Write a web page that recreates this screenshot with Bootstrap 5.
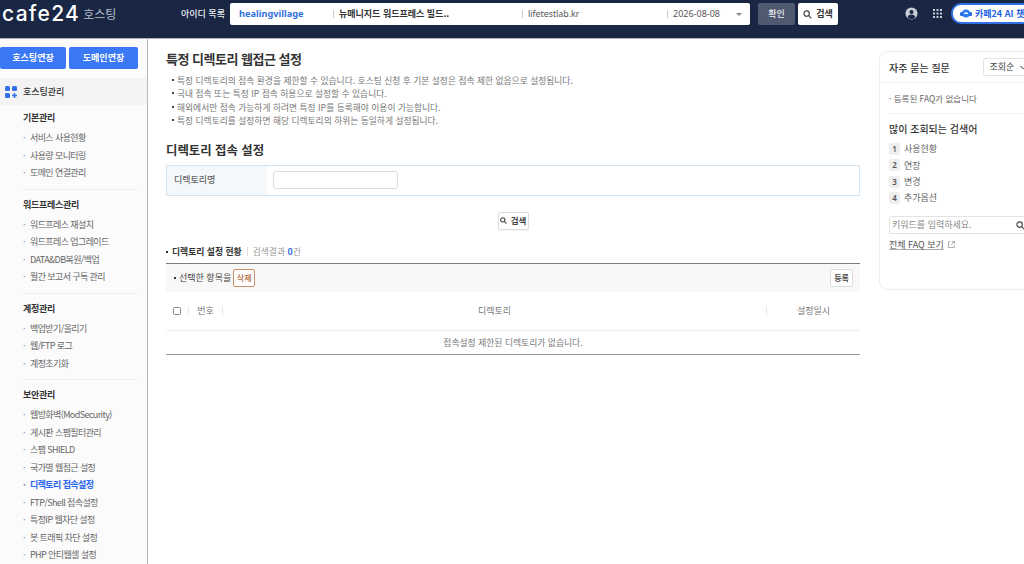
<!DOCTYPE html>
<html lang="ko">
<head>
    <meta charset="UTF-8">
    <meta name="viewport" content="width=device-width, initial-scale=1.0">
    <link href="https://cdn.jsdelivr.net/npm/bootstrap@5.3.0/dist/css/bootstrap.min.css" rel="stylesheet">
    <title>특정 디렉토리 웹접근 설정</title>

    <style>
        html, body { height: 564px; overflow: hidden; }
        body { font-family: "Noto Sans CJK KR", "Noto Sans", sans-serif; font-size: 9px; color: #555; background: #fff; }
        svg { display: block; flex: none; }

        /* top bar */
        .top-bar { height: 39px; background: #1a2744; border-bottom: 1px solid #aeb3bc; padding-top: 3px; }
        .top-bar > * { flex: none; }
        .brand { width: 181px; height: 22px; padding-left: 2px; color: #fff; }
        .brand-logo { font-family: "Inter", sans-serif; font-size: 21px; line-height: 22px; font-weight: 500; letter-spacing: 1.3px; }
        .brand-sub { font-size: 12px; color: #b9bfca; margin-left: 3px; line-height: 22px; }
        .id-label { width: 49px; color: #eef0f4; font-size: 9px; font-weight: 500; line-height: 22px; }
        .acct-bar { width: 520px; height: 22px; background: #fff; border-radius: 2px; line-height: 22px; }
        .acct-id { width: 103px; padding-left: 9px; color: #2f6fe0; font-weight: 700; font-size: 9.2px; font-family: "Noto Sans", sans-serif; }
        .acct-name { width: 189px; color: #333; font-weight: 700; font-size: 9px; white-space: nowrap; }
        .acct-domain { width: 145px; color: #555; font-size: 8.8px; font-family: "Noto Sans", sans-serif; }
        .acct-date { color: #555; font-size: 9px; font-family: "Noto Sans", sans-serif; flex-grow: 1; white-space: nowrap; }
        .acct-sep { width: 1px; height: 8px; background: #ccc; margin-right: 5px; flex: none; }
        .acct-arrow { width: 0; height: 0; border: 3px solid transparent; border-top-color: #888; border-bottom: 0; margin-right: 8px; }
        .btn-confirm { width: 37px; height: 22px; margin-left: 8px; background: #4f5a70; color: #d4d8df; font-size: 9px; font-weight: 700; border-radius: 2px; line-height: 21px; text-align: center; }
        .btn-find { width: 40px; height: 22px; margin-left: 3px; background: #fff; color: #333; font-size: 9px; font-weight: 700; border-radius: 2px; }
        .top-user { margin-left: 67px; }
        .top-grid { margin-left: 15px; }
        .ai-pill { margin-left: 9px; width: 110px; height: 21px; background: #fff; border: 2px solid #2f6fe8; border-radius: 10px; color: #2462e0; font-size: 9px; font-weight: 700; padding-left: 7px; gap: 3px; white-space: nowrap; }

        /* side menu */
        .side-menu { width: 148px; flex: none; background: #fbfbfb; border-right: 1px solid #b9b9b9; height: 525px; overflow: hidden; padding-top: 8px; }
        .side-btn { height: 22px; background: #3a78f5; color: #fff; font-weight: 700; font-size: 9px; border-radius: 2px; line-height: 22px; text-align: center; }
        .side-btn-a { width: 66px; }
        .side-btn-b { width: 69px; margin-left: 3px; }
        .side-head { height: 27px; margin-top: 9px; padding: 1px 0 0 5px; background: #f3f3f3; color: #333; font-weight: 500; font-size: 9px; gap: 6px; margin-bottom: -1px; }
        .side-group { margin: 0 10px 0 23px; padding-bottom: 7px; border-bottom: 1px solid #eee; }
        .side-group + .side-group { margin-top: 8px; }
        .side-group:last-child { border-bottom: 0; }
        .side-title { color: #333; font-weight: 700; font-size: 9px; line-height: 14px; margin-top: 7px; margin-bottom: 4px; letter-spacing: -.3px; }
        .side-item { display: block; color: #666; font-size: 9px; line-height: 17.5px; text-decoration: none; white-space: nowrap; letter-spacing: -.6px; }
        .side-item::before { content: "·"; display: inline-block; width: 7px; color: #888; }
        .side-item.is-on { color: #2a66f0; font-weight: 700; }

        /* main */
        .main-area { width: 731px; flex: none; padding: 11px 19px 0 18px; }
        .page-title { font-size: 13px; font-weight: 700; color: #333; line-height: 18px; margin: 0 0 6px; letter-spacing: -.5px; }
        .guide-list { list-style: none; padding: 0 0 0 7px; margin: 0; color: #777; font-size: 8.75px; line-height: 13.4px; }
        .guide-list li { position: relative; padding-left: 4px; }
        .guide-list li::before { content: ""; position: absolute; left: -1px; top: 5px; width: 2px; height: 2px; background: #444; }
        .sub-title { font-size: 12.4px; font-weight: 700; color: #333; line-height: 18px; margin: 13px 0 6px; }
        .filter-row { height: 31px; border: 1px solid #d3e4f3; }
        .filter-label { width: 100px; background: #f5f8fb; color: #666; font-size: 9px; padding-left: 7px; font-weight: 500; }
        .filter-input { width: 125px; height: 18px; margin-left: 6px; border: 1px solid #ddd; border-radius: 3px; }
        .btn-sm-find { height: 18px; width: 31px; background: #fff; border: 1px solid #ddd; border-radius: 2px; font-size: 8.5px; font-weight: 700; color: #444; box-shadow: 0 1px 1px rgba(0,0,0,.05); }
        .search-row { margin-top: 16px; }
        .result-row { margin-top: 14px; height: 16px; color: #999; font-size: 8.8px; line-height: 16px; }
        .result-name { color: #333; font-weight: 700; padding-left: 6px; position: relative; }
        .result-name::before { content: ""; position: absolute; left: 0; top: 7px; width: 2px; height: 2px; background: #333; }
        .result-sep { width: 1px; height: 9px; background: #ddd; margin: 0 5px; }
        .result-num { color: #2f6fe0; font-weight: 700; }
        .tool-row { margin-top: 3px; height: 29px; background: #f8f8f8; border-top: 1px solid #7c7c7c; padding: 0 7px 0 8px; color: #444; font-size: 9px; }
        .tool-row span.dot { width: 2px; height: 2px; background: #333; margin-right: 3px; }
        .btn-del { width: 22px; height: 18px; text-align: center; margin-left: 2px; background: #fff; border: 1px solid #c9926b; border-radius: 2px; color: #b4683a; font-size: 8px; font-weight: 500; line-height: 16px; }
        .btn-add { width: 23px; height: 18px; text-align: center; background: #fff; border: 1px solid #ddd; border-radius: 2px; color: #444; font-size: 8px; font-weight: 700; line-height: 16px; }
        .data-grid { color: #777; font-size: 9px; }
        .grid-head { height: 39px; padding-top: 1px; border-bottom: 1px solid #eee; }
        .grid-check { width: 8px; height: 8px; border: 1px solid #888; border-radius: 1.5px; margin: 0 7px 0 7px; background: #fff; }
        .grid-sep { width: 1px; height: 8px; background: #e5e5e5; }
        .grid-no { width: 33px; text-align: center; }
        .grid-dir { flex-grow: 1; text-align: center; }
        .grid-date { width: 93px; text-align: center; }
        .grid-empty { height: 24px; line-height: 23px; text-align: center; border-bottom: 1px solid #999; font-size: 8.8px; }

        /* right panel */
        .faq-col { flex: none; width: 145px; padding-top: 12px; }
        .faq-box { width: 175px; height: 239px; border: 1px solid #eee; border-radius: 9px; background: #fff; }
        .faq-top { height: 31px; border-bottom: 1px solid #f0f0f0; padding-left: 9px; }
        .faq-title { color: #333; font-size: 10px; font-weight: 500; width: 95px; }
        .faq-sort { width: 70px; height: 18px; border: 1px solid #e3e3e3; border-radius: 2px; color: #444; font-size: 9px; padding-left: 5px; gap: 6px; }
        .faq-none { margin: 0 0 0 9px; height: 31px; border-bottom: 1px solid #f0f0f0; color: #666; font-size: 8.5px; line-height: 31px; }
        .faq-sub { color: #333; font-size: 10px; font-weight: 500; padding-left: 9px; line-height: 14px; margin: 8px 0 5px; }
        .faq-kw { height: 16.3px; padding-left: 9px; color: #666; font-size: 9px; gap: 4px; }
        .faq-num { width: 11px; height: 12px; background: #eee; border-radius: 2px; text-align: center; line-height: 12px; font-size: 8px; color: #555; font-family: "Noto Sans", sans-serif; font-weight: 600; }
        .faq-input { margin: 10px 0 0 9px; height: 18px; border: 1px solid #e3e3e3; border-radius: 2px; padding-left: 2px; color: #888; font-size: 9px; gap: 44px; }
        .faq-link { padding-left: 9px; margin-top: 4px; color: #555; font-size: 9px; line-height: 13px; gap: 4px; }
        .faq-link u { text-decoration-color: #aaa; }
    </style>
</head>
<body>
<header class="top-bar d-flex">
    <div class="brand d-flex">
        <span class="brand-logo">cafe24</span>
        <span class="brand-sub">호스팅</span>
    </div>
    <div class="id-label">아이디 목록</div>
    <div class="acct-bar d-flex align-items-center">
        <div class="acct-id">healingvillage</div>
        <div class="acct-name d-flex align-items-center"><span class="acct-sep"></span>뉴매니지드 워드프레스 빌드..</div>
        <div class="acct-domain d-flex align-items-center"><span class="acct-sep"></span>lifetestlab.kr</div>
        <div class="acct-date d-flex align-items-center"><span class="acct-sep"></span>2026-08-08</div>
        <span class="acct-arrow"></span>
    </div>
    <div class="btn-confirm">확인</div>
    <div class="btn-find d-flex align-items-center justify-content-center gap-1">
        <svg width="9" height="9" viewBox="0 0 10 10" fill="none" stroke="#444" stroke-width="1.3"><circle cx="4" cy="4" r="3"/><path d="M6.3 6.3 9.3 9.3"/></svg>
        검색
    </div>
    <svg class="top-user mt-1" width="13" height="13" viewBox="0 0 14 14"><circle cx="7" cy="7" r="6.5" fill="#c8ccd4"/><circle cx="7" cy="5.3" r="2.2" fill="#1a2744"/><path d="M2.8 11c.8-2 2.4-2.8 4.2-2.8s3.4.8 4.2 2.8C10 12.300 8.500 13 7 13s-3-.7-4.200-2z" fill="#1a2744"/></svg>
    <svg class="top-grid mt-1" width="9" height="13" viewBox="0 0 9 13" fill="#c8ccd4"><rect x="0" y="2" width="2" height="2"/><rect x="3.500" y="2" width="2" height="2"/><rect x="7" y="2" width="2" height="2"/><rect x="0" y="5.500" width="2" height="2"/><rect x="3.500" y="5.500" width="2" height="2"/><rect x="7" y="5.500" width="2" height="2"/><rect x="0" y="9" width="2" height="2"/><rect x="3.500" y="9" width="2" height="2"/><rect x="7" y="9" width="2" height="2"/></svg>
    <div class="ai-pill d-flex align-items-center">
        <svg width="12" height="10" viewBox="0 0 12 10"><rect x="0" y="3" width="12" height="4" rx="1.500" fill="#1f5fd8"/><circle cx="6" cy="4.500" r="4" fill="#2f7cf0"/><rect x="4" y="3.500" width="4" height="1.500" rx=".7" fill="#fff"/></svg>
        카페24 AI 챗봇
    </div>
</header>

<div class="d-flex">
    <nav class="side-menu">
        <div class="d-flex">
            <div class="side-btn side-btn-a">호스팅연장</div>
            <div class="side-btn side-btn-b">도메인연장</div>
        </div>
        <div class="side-head d-flex align-items-center">
            <svg width="12" height="12" viewBox="0 0 12 12"><rect x="0" y="0" width="5" height="5" rx="1.500" fill="#2f6fe8"/><rect x="7" y="0" width="5" height="5" rx="1.500" fill="#2f6fe8"/><rect x="0" y="7" width="5" height="5" rx="1.500" fill="#2f6fe8"/><path d="M9.500 7v5M7 9.500h5" stroke="#2f6fe8" stroke-width="1.600"/></svg>
            호스팅관리
        </div>
        <div class="side-group">
            <div class="side-title">기본관리</div>
            <a class="side-item" href="#">서비스 사용현황</a>
            <a class="side-item" href="#">사용량 모니터링</a>
            <a class="side-item" href="#">도메인 연결관리</a>
        </div>
        <div class="side-group">
            <div class="side-title">워드프레스관리</div>
            <a class="side-item" href="#">워드프레스 재설치</a>
            <a class="side-item" href="#">워드프레스 업그레이드</a>
            <a class="side-item" href="#">DATA&amp;DB복원/백업</a>
            <a class="side-item" href="#">월간 보고서 구독 관리</a>
        </div>
        <div class="side-group">
            <div class="side-title">계정관리</div>
            <a class="side-item" href="#">백업받기/올리기</a>
            <a class="side-item" href="#">웹/FTP 로그</a>
            <a class="side-item" href="#">계정초기화</a>
        </div>
        <div class="side-group">
            <div class="side-title">보안관리</div>
            <a class="side-item" href="#">웹방화벽(ModSecurity)</a>
            <a class="side-item" href="#">게시판 스팸필터관리</a>
            <a class="side-item" href="#">스팸 SHIELD</a>
            <a class="side-item" href="#">국가별 웹접근 설정</a>
            <a class="side-item is-on" href="#">디렉토리 접속설정</a>
            <a class="side-item" href="#">FTP/Shell 접속설정</a>
            <a class="side-item" href="#">특정IP 웹차단 설정</a>
            <a class="side-item" href="#">봇 트래픽 차단 설정</a>
            <a class="side-item" href="#">PHP 안티웹셸 설정</a>
        </div>
    </nav>

    <main class="main-area">
        <h1 class="page-title">특정 디렉토리 웹접근 설정</h1>
        <ul class="guide-list">
            <li>특정 디렉토리의 접속 환경을 제한할 수 있습니다. 호스팅 신청 후 기본 설정은 접속 제한 없음으로 설정됩니다.</li>
            <li>국내 접속 또는 특정 IP 접속 허용으로 설정할 수 있습니다.</li>
            <li>해외에서만 접속 가능하게 하려면 특정 IP를 등록해야 이용이 가능합니다.</li>
            <li>특정 디렉토리를 설정하면 해당 디렉토리의 하위는 동일하게 설정됩니다.</li>
        </ul>
        <h2 class="sub-title">디렉토리 접속 설정</h2>
        <div class="filter-row d-flex">
            <div class="filter-label d-flex align-items-center">디렉토리명</div>
            <div class="d-flex align-items-center"><div class="filter-input"></div></div>
        </div>
        <div class="search-row d-flex justify-content-center">
            <div class="btn-sm-find d-flex align-items-center justify-content-center gap-1">
                <svg width="7" height="7" viewBox="0 0 10 10" fill="none" stroke="#444" stroke-width="1.500"><circle cx="4" cy="4" r="3"/><path d="M6.300 6.300 9.300 9.300"/></svg>
                검색
            </div>
        </div>
        <div class="result-row d-flex align-items-center">
            <span class="result-name">디렉토리 설정 현황</span>
            <span class="result-sep"></span>
            <span>검색결과 <span class="result-num">0</span>건</span>
        </div>
        <div class="tool-row d-flex align-items-center">
            <span class="dot"></span>선택한 항목을
            <span class="btn-del">삭제</span>
            <span class="btn-add ms-auto">등록</span>
        </div>
        <div class="data-grid">
            <div class="grid-head d-flex align-items-center">
                <span class="grid-check"></span>
                <span class="grid-sep"></span>
                <span class="grid-no">번호</span>
                <span class="grid-sep"></span>
                <span class="grid-dir">디렉토리</span>
                <span class="grid-sep"></span>
                <span class="grid-date">설정일시</span>
            </div>
            <div class="grid-empty">접속설정 제한된 디렉토리가 없습니다.</div>
        </div>
    </main>

    <aside class="faq-col">
        <div class="faq-box">
            <div class="faq-top d-flex align-items-center">
                <div class="faq-title">자주 묻는 질문</div>
                <div class="faq-sort d-flex align-items-center">조회순
                    <svg width="7" height="5" viewBox="0 0 7 5" fill="none" stroke="#333" stroke-width="1"><path d="M.5 1 3.500 4 6.500 1"/></svg>
                </div>
            </div>
            <div class="faq-none">· 등록된 FAQ가 없습니다</div>
            <div class="faq-sub">많이 조회되는 검색어</div>
            <div class="faq-kw d-flex align-items-center"><span class="faq-num">1</span>사용현황</div>
            <div class="faq-kw d-flex align-items-center"><span class="faq-num">2</span>연장</div>
            <div class="faq-kw d-flex align-items-center"><span class="faq-num">3</span>변경</div>
            <div class="faq-kw d-flex align-items-center"><span class="faq-num">4</span>추가옵션</div>
            <div class="faq-input d-flex align-items-center">키워드를 입력하세요.
                <svg width="9" height="9" viewBox="0 0 10 10" fill="none" stroke="#444" stroke-width="1.300"><circle cx="4" cy="4" r="3"/><path d="M6.300 6.300 9.300 9.300"/></svg>
            </div>
            <div class="faq-link d-flex align-items-center"><u>전체 FAQ 보기</u>
                <svg width="7" height="7" viewBox="0 0 8 8" fill="none" stroke="#888" stroke-width=".8"><path d="M3 1H.5v6.500H7V5M4.500.5h3v3M7.500.5 3.500 4.500"/></svg>
            </div>
        </div>
    </aside>
</div>

<script src="https://cdn.jsdelivr.net/npm/bootstrap@5.3.0/dist/js/bootstrap.bundle.min.js"></script>
</body>
</html>
